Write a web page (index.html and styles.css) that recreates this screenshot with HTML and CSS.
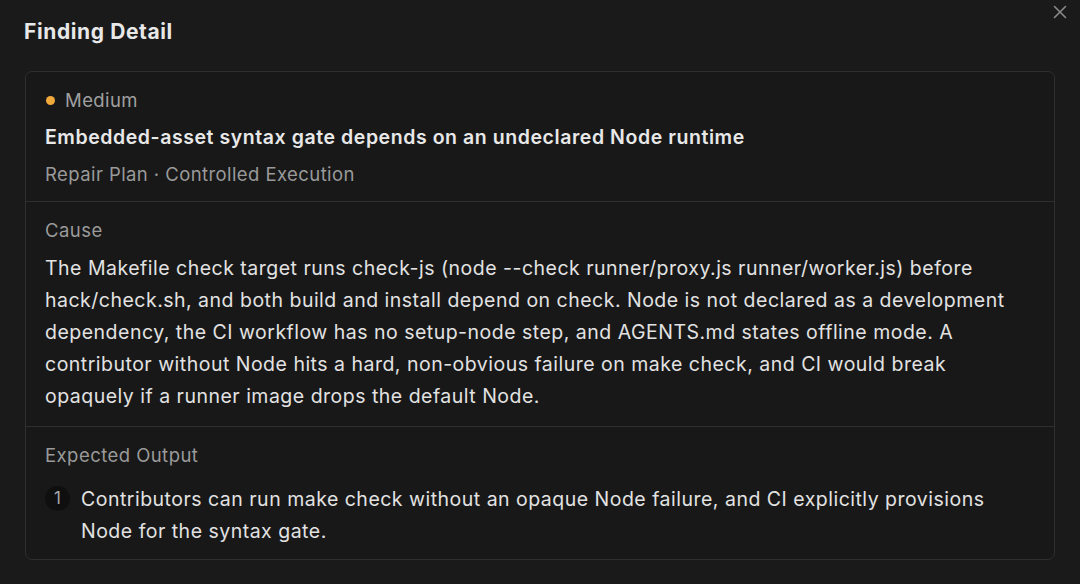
FILE: index.html
```html
<!DOCTYPE html>
<html lang="en">
<head>
  <meta charset="UTF-8">
  <meta name="viewport" content="width=device-width, initial-scale=1.0">
  <title>Finding Detail</title>
  <link rel="stylesheet" href="styles.css">
</head>
<body>
  <div class="dialog">
    <div class="dialog-header">
      <h2>Finding Detail</h2>
      <button class="close-button" aria-label="Close">
        <svg width="14" height="14" viewBox="0 0 14 14">
          <path d="M1.5 1.5 L12.5 12.5 M12.5 1.5 L1.5 12.5" stroke="currentColor" stroke-width="1.6" stroke-linecap="round"/>
        </svg>
      </button>
    </div>

    <div class="card">
      <div class="section">
        <div class="severity"><span class="dot"></span>Medium</div>
        <div class="finding-title">Embedded-asset syntax gate depends on an undeclared Node runtime</div>
        <div class="meta">Repair Plan · Controlled Execution</div>
      </div>

      <div class="section">
        <div class="label">Cause</div>
        <p class="body-text">The Makefile check target runs check-js (node --check runner/proxy.js runner/worker.js) before hack/check.sh, and both build and install depend on check. Node is not declared as a development dependency, the CI workflow has no setup-node step, and AGENTS.md states offline mode. A contributor without Node hits a hard, non-obvious failure on make check, and CI would break opaquely if a runner image drops the default Node.</p>
      </div>

      <div class="section last">
        <div class="label">Expected Output</div>
        <ol class="outputs">
          <li><span class="num">1</span><span>Contributors can run make check without an opaque Node failure, and CI explicitly provisions Node for the syntax gate.</span></li>
        </ol>
      </div>
    </div>
  </div>
</body>
</html>
```

FILE: styles.css
```css
* {
  box-sizing: border-box;
}
body {
  margin: 0;
  background-color: #1a1a1a;
  color: #e4e4e4;
  font-family: Inter, "Noto Sans", sans-serif;
}
.dialog {
  padding: 0 25px 24px 25px;
}
.dialog-header {
  display: flex;
  justify-content: space-between;
  align-items: flex-start;
  height: 71px;
}
.dialog-header h2 {
  margin: 18px 0 0 -1px;
  font-size: 21px;
  font-weight: 700;
  letter-spacing: 0.6px;
  line-height: 28px;
  color: #e8e8e8;
}
.close-button {
  margin: 5px -12px 0 0;
  padding: 0;
  border: none;
  background: none;
  color: #8a8a8a;
  width: 14px;
  height: 14px;
  display: flex;
}
.card {
  border: 1px solid #2f2f2f;
  border-radius: 7px;
  background-color: #181818;
}
.section {
  padding: 16px 20px 14px 19px;
  border-bottom: 1px solid #2f2f2f;
}
.section.last {
  border-bottom: none;
  padding-bottom: 12px;
}
.severity {
  display: flex;
  align-items: center;
  gap: 10px;
  font-size: 18.5px;
  letter-spacing: 0.42px;
  line-height: 24px;
  color: #a0a0a0;
}
.dot {
  width: 9px;
  height: 9px;
  margin-left: 1px;
  border-radius: 50%;
  background-color: #f2a93b;
}
.finding-title {
  margin-top: 11px;
  font-size: 19.5px;
  font-weight: 600;
  letter-spacing: 0.56px;
  line-height: 28px;
  color: #e8e8e8;
}
.meta {
  margin-top: 10px;
  font-size: 18.5px;
  letter-spacing: 0.42px;
  line-height: 26px;
  color: #9a9a9a;
}
.label {
  font-size: 18.5px;
  letter-spacing: 0.45px;
  line-height: 24px;
  color: #9a9a9a;
}
.body-text {
  margin: 10px 0 0 0;
  font-size: 19.5px;
  letter-spacing: 0.49px;
  line-height: 32px;
  color: #e2e2e2;
}
.outputs {
  list-style: none;
  margin: 16px 0 0 0;
  padding: 0;
}
.outputs li {
  display: flex;
  gap: 11px;
  font-size: 19.5px;
  letter-spacing: 0.49px;
  line-height: 32px;
  color: #e2e2e2;
}
.num {
  flex: none;
  width: 25px;
  height: 25px;
  margin-top: 3px;
  border-radius: 50%;
  background-color: #0f0f0f;
  color: #a8a8a8;
  font-size: 17px;
  letter-spacing: 0;
  line-height: 25px;
  text-align: center;
}
```
